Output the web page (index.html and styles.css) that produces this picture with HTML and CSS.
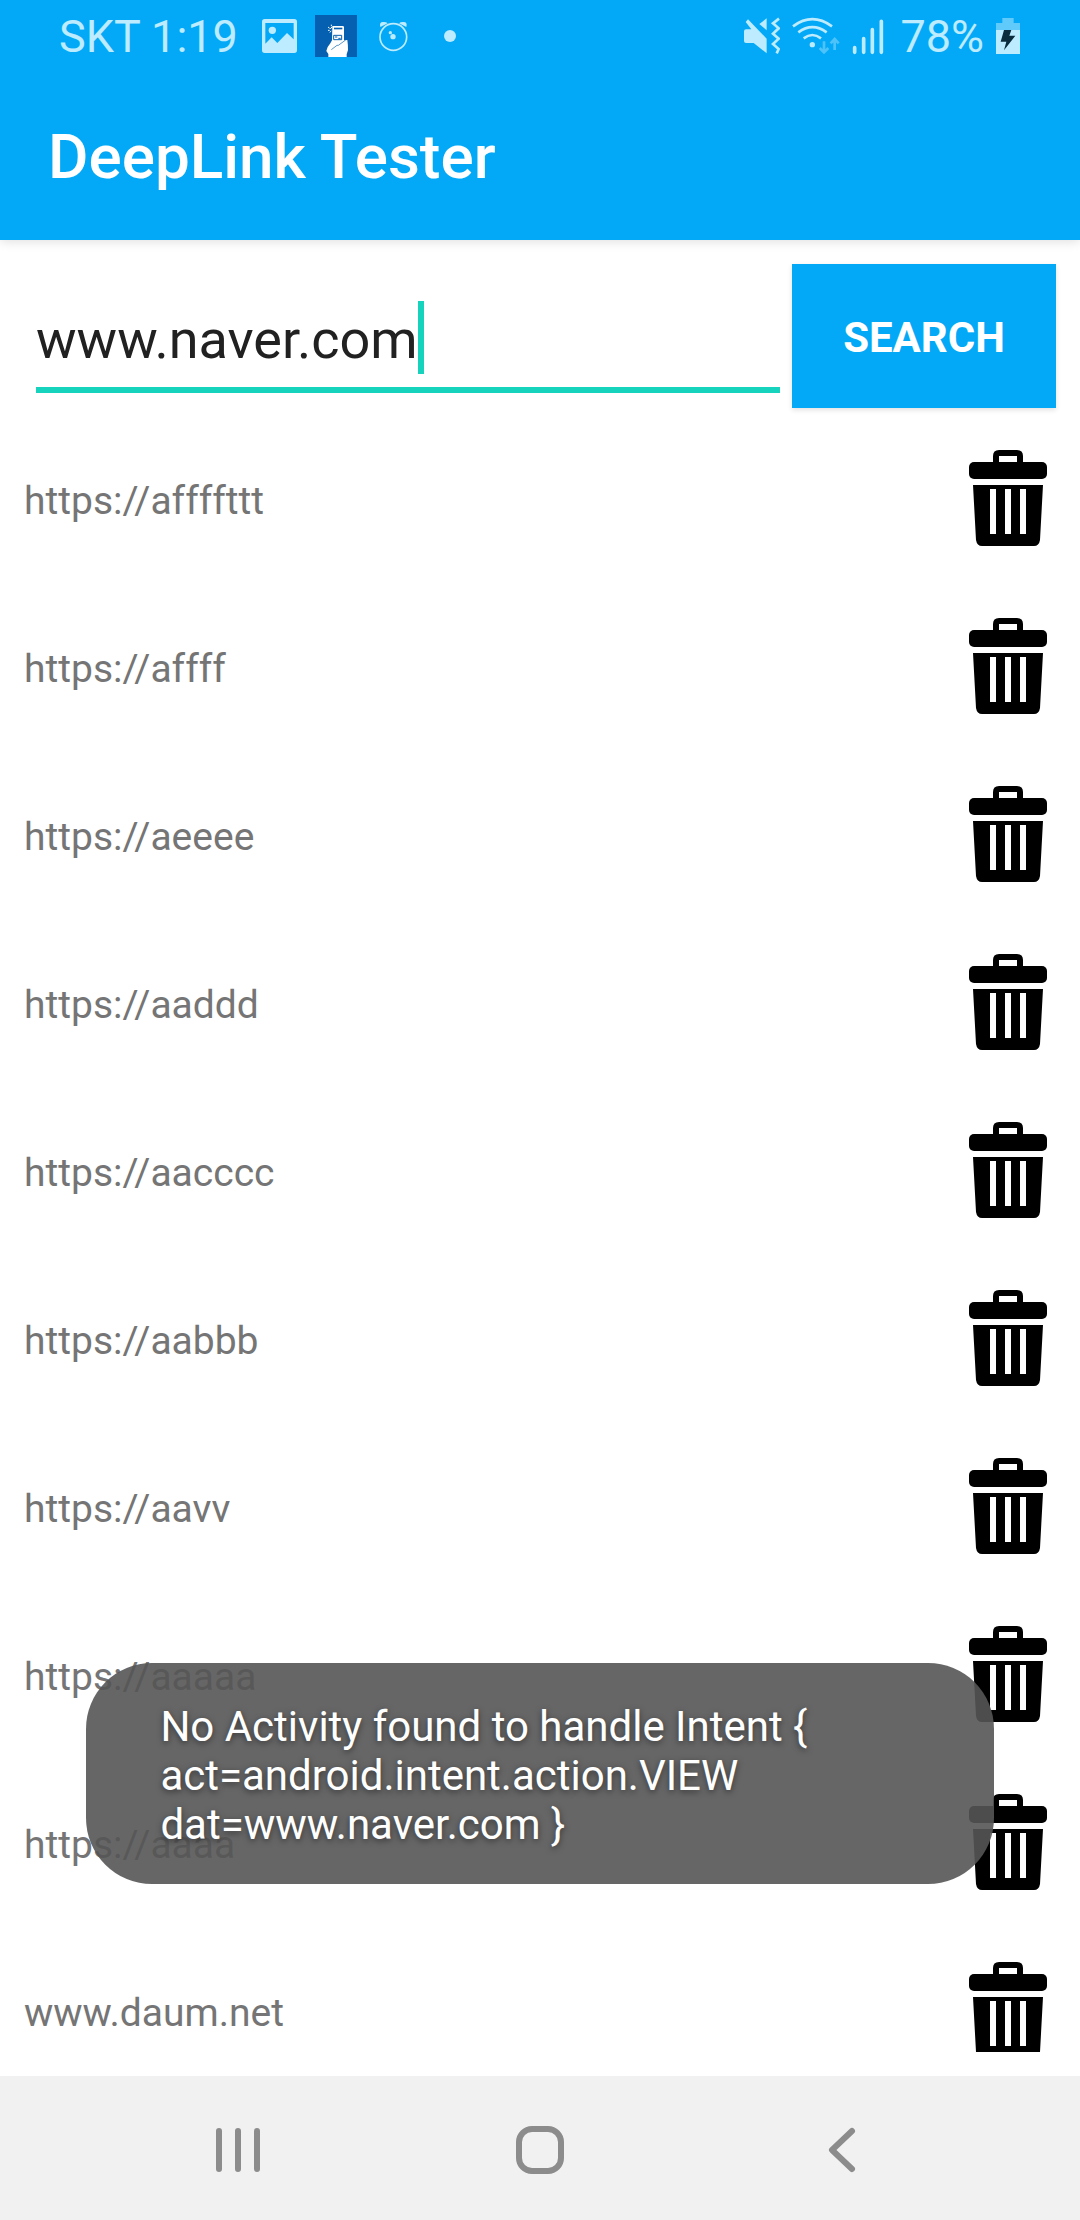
FILE: index.html
```html
<!DOCTYPE html>
<html lang="en">
<head>
<meta charset="utf-8">
<meta name="viewport" content="width=device-width, initial-scale=1">
<title>DeepLink Tester</title>
<link rel="stylesheet" href="styles.css">
</head>
<body>
<svg class="sprite" aria-hidden="true">
  <symbol id="trash" viewBox="0 0 96 96">
    <path d="M33 13V6Q33 0 39 0H57Q63 0 63 6V13H57V6H39V13Z"/>
    <rect x="9" y="12" width="78" height="17" rx="5"/>
    <path fill-rule="evenodd" d="M13 35H83L80 90Q79 96 74 96H22Q17 96 16 90ZM30 39V84H36V39ZM45 39V84H51V39ZM60 39V84H66V39Z"/>
  </symbol>
</svg>

<header class="header">
  <div class="status">
    <div class="status-left">
      <span class="clock"><span>SKT</span> <span>1:19</span></span>
      <svg class="i-picture" viewBox="789 45 105 126"><path fill-rule="evenodd" d="M797 57H886Q894 57 894 65V151Q894 159 886 159H797Q789 159 789 151V65Q789 57 797 57ZM799 69V131L818 112L835 129L864 99L884 118V69Z"/><circle cx="820" cy="91" r="11"/></svg>
      <svg class="i-app" viewBox="0 0 126 126"><path fill="#0560b1" d="M0 0H126V126H0Z"/><path fill="#fff" d="M52 36Q52 33 55 33H83Q87 33 87 37V76L97 75Q99 88 99 105L95 118V126H40V117L34 108Q36 96 46 85L51 76Z"/><path fill="#0560b1" d="M57 38H82V43H57Z"/><path fill="none" stroke="#0560b1" stroke-width="3" d="M56 61H80V74H56Z"/><path d="M60 66H67M70 70H77" stroke="#0560b1" stroke-width="3"/><path d="M49 104L66 91H70L92 75" stroke="#0560b1" stroke-width="2" fill="none"/><path d="M39 36L44 40M39 46H44M44 52L49 48M46 42L52 34M49 29V33" stroke="#fff" stroke-width="3"/></svg>
      <svg class="i-alarm" viewBox="1140 45 87 126"><circle cx="1183" cy="111" r="40" fill="none" stroke="currentColor" stroke-width="5"/><path d="M1144 81Q1140 66 1152 66Q1161 65 1166 70ZM1222 81Q1226 66 1214 66Q1205 65 1200 70Z"/><circle cx="1182" cy="110" r="8"/><circle cx="1174" cy="98" r="5"/></svg>
      <svg class="i-dot" viewBox="0 0 12 42"><circle cx="6" cy="21" r="6"/></svg>
    </div>
    <div class="status-right">
      <svg class="i-mute" viewBox="126 45 108 126"><path d="M132 88H148L131 66L138 58L194 116V160L155 129H132Q126 129 126 123V94Q126 88 132 88ZM172 72L194 55V91Z"/><path d="M231 56L213 70L230 85L213 101L230 116L213 132L230 147L224 160" fill="none" stroke="currentColor" stroke-width="8"/></svg>
      <svg class="i-wifi" viewBox="273 45 144 126"><g fill="none" stroke="currentColor" stroke-width="8"><path d="M276 79Q334 36 393 79M292 97Q334 66 377 97M308 115Q334 95 360 115"/></g><circle cx="334" cy="134" r="8"/><g opacity=".4" stroke="currentColor" stroke-width="8" fill="none"><path d="M369 124V158M356 144L369 157L382 144M401 150V118M389 130L401 117L413 130"/></g></svg>
      <svg class="i-signal" viewBox="453 45 96 126"><path d="M461 143V157M488 116V157M514 89V157M541 64V157" stroke="currentColor" stroke-width="11" stroke-linecap="round"/></svg>
      <span>78%</span>
      <svg class="i-battery" viewBox="888 45 72 126"><path opacity=".5" d="M888 69H907V54H941V69H960V90H888Z"/><path d="M888 90H960V162H888Z"/><path fill="#0b2c3d" d="M912 90H934L928 107H946L912 151L919 125H902Z"/></svg>
    </div>
  </div>
  <h1 class="title">DeepLink Tester</h1>
</header>

<main class="content">
  <form class="search">
    <div class="field">
      <input class="field-input" type="text" value="www.naver.com" aria-label="Link" spellcheck="false">
      <span class="caret"></span>
    </div>
    <button class="search-button" type="button">SEARCH</button>
  </form>
  <ul class="links">
    <li class="row"><span>https://affffttt</span><button class="delete" aria-label="Delete"><svg><use href="#trash"/></svg></button></li>
    <li class="row"><span>https://affff</span><button class="delete" aria-label="Delete"><svg><use href="#trash"/></svg></button></li>
    <li class="row"><span>https://aeeee</span><button class="delete" aria-label="Delete"><svg><use href="#trash"/></svg></button></li>
    <li class="row"><span>https://aaddd</span><button class="delete" aria-label="Delete"><svg><use href="#trash"/></svg></button></li>
    <li class="row"><span>https://aacccc</span><button class="delete" aria-label="Delete"><svg><use href="#trash"/></svg></button></li>
    <li class="row"><span>https://aabbb</span><button class="delete" aria-label="Delete"><svg><use href="#trash"/></svg></button></li>
    <li class="row"><span>https://aavv</span><button class="delete" aria-label="Delete"><svg><use href="#trash"/></svg></button></li>
    <li class="row"><span>https://aaaaa</span><button class="delete" aria-label="Delete"><svg><use href="#trash"/></svg></button></li>
    <li class="row"><span>https://aaaa</span><button class="delete" aria-label="Delete"><svg><use href="#trash"/></svg></button></li>
    <li class="row"><span>www.daum.net</span><button class="delete" aria-label="Delete"><svg><use href="#trash"/></svg></button></li>
  </ul>
</main>

<div class="toast" role="status">No Activity found to handle Intent {<br>act=android.intent.action.VIEW<br>dat=www.naver.com }</div>

<nav class="navbar">
  <button class="nav-button" aria-label="Recent apps"><svg viewBox="0 0 48 48"><path d="M5 5V43M24 5V43M43 5V43"/></svg></button>
  <button class="nav-button" aria-label="Home"><svg viewBox="0 0 48 48"><rect x="3" y="3" width="42" height="42" rx="13"/></svg></button>
  <button class="nav-button" aria-label="Back"><svg viewBox="0 0 48 48"><path d="M34 5L14 24L34 43"/></svg></button>
</nav>
</body>
</html>
```
FILE: styles.css
```css
* {
  box-sizing: border-box;
}

body {
  position: relative;
  display: flex;
  flex-direction: column;
  height: 100vh;
  margin: 0;
  background: #fff;
  font-family: Roboto, "Noto Sans", sans-serif;
  font-variant-ligatures: none;
}

button {
  padding: 0;
  border: 0;
  background: none;
  font-family: inherit;
}

svg {
  display: block;
}

.sprite {
  position: absolute;
  width: 0;
  height: 0;
}

.header {
  z-index: 1;
  flex: none;
  background: #03a9f7;
  box-shadow: 0 2px 10px rgba(0, 0, 0, 0.12);
}

.status {
  display: flex;
  justify-content: space-between;
  height: 72px;
  padding: 0 60px 0 59px;
  color: #bdebff;
  font-size: 45px;
  line-height: 72px;
}

.status-left,
.status-right {
  display: flex;
  align-items: center;
}

.status-left {
  gap: 18px;
}

.status-right {
  gap: 12px;
}

.status span {
  padding-top: 2px;
}

.status svg {
  height: 42px;
  fill: currentColor;
}

.i-picture {
  width: 35px;
  margin-left: 6px;
}

.i-app {
  width: 42px;
}

.i-alarm {
  width: 29px;
  margin: 0 18px 0 4px;
}

.i-dot {
  width: 12px;
}

.i-mute {
  width: 36px;
}

.i-wifi {
  width: 48px;
}

.i-signal {
  width: 32px;
  margin-right: 4px;
}

.i-battery {
  width: 24px;
}

.title {
  margin: 0;
  padding: 2px 48px 0;
  color: #fff;
  font-size: 62px;
  font-weight: 500;
  line-height: 166px;
}

.content {
  display: flex;
  flex: 1;
  flex-direction: column;
  gap: 24px;
  min-height: 0;
  padding: 24px;
}

.search {
  display: flex;
  flex: none;
  gap: 12px;
}

.field {
  position: relative;
  flex: 1;
  padding: 21px 0 15px 12px;
}

.field-input {
  width: 100%;
  height: 108px;
  padding: 6px 0 0;
  border: 0;
  border-bottom: 6px solid #16d3bd;
  outline: 0;
  background: none;
  color: #212121;
  font-family: inherit;
  font-size: 54px;
}

.caret {
  position: absolute;
  top: 37px;
  left: 394px;
  width: 6px;
  height: 73px;
  background: #16d3bd;
}

.search-button {
  width: 264px;
  height: 144px;
  padding-top: 2px;
  background: #03a9f7;
  box-shadow: 0 2px 5px rgba(0, 0, 0, 0.12);
  color: #fff;
  font-size: 42px;
  font-weight: 700;
}

.links {
  display: flex;
  flex: 1;
  flex-direction: column;
  gap: 36px;
  min-height: 0;
  margin: 0;
  padding: 0;
  overflow: hidden;
  list-style: none;
}

.row {
  display: flex;
  flex: none;
  align-items: center;
  justify-content: space-between;
  height: 132px;
  color: #757575;
  font-size: 39px;
  line-height: 48px;
}

.row span {
  padding-top: 5px;
}

.delete svg {
  width: 96px;
  height: 96px;
}

.toast {
  position: absolute;
  right: 8%;
  bottom: 336px;
  left: 8%;
  z-index: 2;
  padding: 39px 74px 35px;
  border-radius: 66px;
  background: rgba(85, 85, 85, 0.9);
  color: #fff;
  font-size: 42px;
  line-height: 49px;
  text-shadow: 0 2px 6px rgba(0, 0, 0, 0.5);
}

.navbar {
  display: flex;
  flex: none;
  height: 144px;
  padding: 0 8%;
  background: #f1f1f1;
}

.nav-button {
  display: flex;
  flex: 1;
  align-items: center;
  justify-content: center;
  padding-top: 4px;
}

.nav-button svg {
  width: 48px;
  height: 48px;
  fill: none;
  stroke: #8c8c8c;
  stroke-width: 6;
  stroke-linecap: round;
  stroke-linejoin: round;
}
```
